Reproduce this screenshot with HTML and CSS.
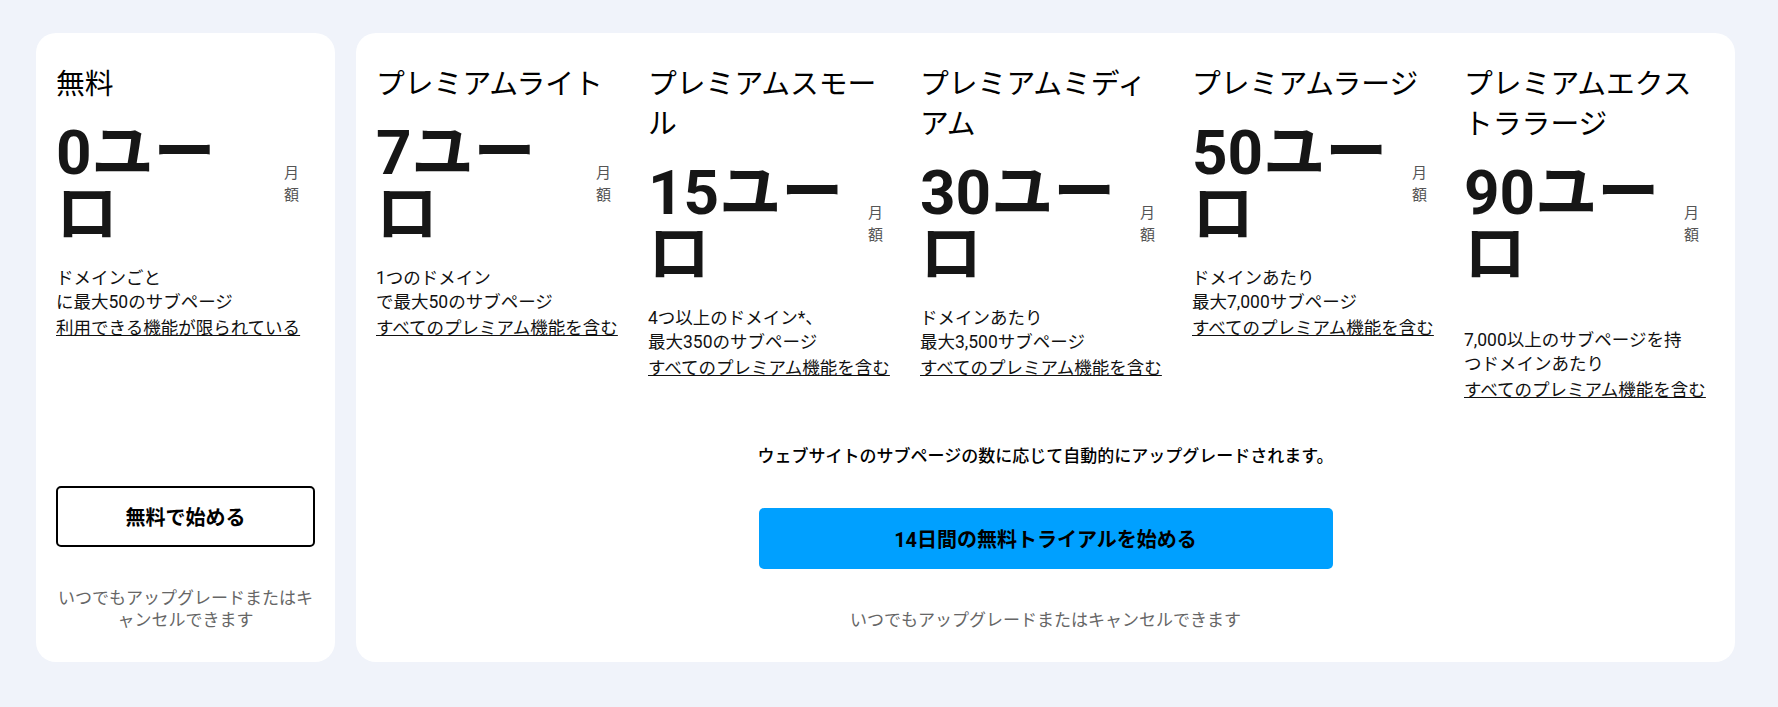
FILE: index.html
```html
<!DOCTYPE html>
<html lang="ja">
<head>
<meta charset="utf-8">
<title>料金プラン</title>
<link rel="stylesheet" href="styles.css">
</head>
<body>
<main class="plans">
  <section class="card card-free">
    <div class="plan">
      <h2 class="plan-title">無料</h2>
      <div class="price-row"><span class="price">0ユーロ</span><span class="per">月額</span></div>
      <p class="desc">ドメインごと<br>に最大50のサブページ</p>
      <a class="features" href="#">利用できる機能が限られている</a>
    </div>
    <a class="btn btn-outline" href="#">無料で始める</a>
    <p class="note">いつでもアップグレードまたはキャンセルできます</p>
  </section>

  <section class="card card-premium">
    <div class="tiers">
      <div class="plan">
        <h2 class="plan-title">プレミアムライト</h2>
        <div class="price-row"><span class="price">7ユーロ</span><span class="per">月額</span></div>
        <p class="desc">1つのドメイン<br>で最大50のサブページ</p>
        <a class="features" href="#">すべてのプレミアム機能を含む</a>
      </div>
      <div class="plan">
        <h2 class="plan-title">プレミアムスモール</h2>
        <div class="price-row"><span class="price">15ユーロ</span><span class="per">月額</span></div>
        <p class="desc">4つ以上のドメイン*、<br>最大350のサブページ</p>
        <a class="features" href="#">すべてのプレミアム機能を含む</a>
      </div>
      <div class="plan">
        <h2 class="plan-title">プレミアムミディアム</h2>
        <div class="price-row"><span class="price">30ユーロ</span><span class="per">月額</span></div>
        <p class="desc">ドメインあたり<br>最大3,500サブページ</p>
        <a class="features" href="#">すべてのプレミアム機能を含む</a>
      </div>
      <div class="plan">
        <h2 class="plan-title">プレミアムラージ</h2>
        <div class="price-row"><span class="price">50ユーロ</span><span class="per">月額</span></div>
        <p class="desc">ドメインあたり<br>最大7,000サブページ</p>
        <a class="features" href="#">すべてのプレミアム機能を含む</a>
      </div>
      <div class="plan">
        <h2 class="plan-title">プレミアムエクストララージ</h2>
        <div class="price-row"><span class="price">90ユーロ</span><span class="per">月額</span></div>
        <p class="desc desc-offset">7,000以上のサブページを持<br>つドメインあたり</p>
        <a class="features" href="#">すべてのプレミアム機能を含む</a>
      </div>
    </div>
    <p class="auto">ウェブサイトのサブページの数に応じて自動的にアップグレードされます。</p>
    <a class="btn btn-primary" href="#">14日間の無料トライアルを始める</a>
    <p class="note">いつでもアップグレードまたはキャンセルできます</p>
  </section>
</main>
</body>
</html>
```
FILE: styles.css
```css
* {
  box-sizing: border-box;
  margin: 0;
  padding: 0;
}

body {
  margin: 0;
  background: #f0f3fa;
  font-family: Roboto, "Noto Sans CJK JP", sans-serif;
  color: #111;
}

.plans {
  display: grid;
  grid-template-columns: 299px 1379px;
  column-gap: 21px;
  padding: 33px 0 0 36px;
  align-items: stretch;
}

.card {
  background: #fff;
  border-radius: 20px;
  padding: 31px 20px 31px;
  display: flex;
  flex-direction: column;
}

.plan-title {
  font-size: 28.8px;
  font-weight: 400;
  line-height: 40px;
  margin-bottom: 18px;
  color: #000;
}

.price-row {
  display: flex;
  justify-content: space-between;
  align-items: center;
  margin-bottom: 20px;
}

.price {
  max-width: 205px;
  font-size: 62px;
  font-weight: 700;
  line-height: 62px;
  color: #161616;
}

.per {
  width: 1em;
  margin-right: 16px;
  font-size: 15px;
  line-height: 22px;
  color: #555;
}

.desc {
  font-size: 17.5px;
  line-height: 24px;
  color: #111;
}

.desc-offset {
  padding-top: 22px;
}

.features {
  display: block;
  margin-top: 2px;
  font-size: 17.5px;
  line-height: 24px;
  color: #111;
  text-decoration: underline;
}

.btn {
  display: flex;
  align-items: center;
  justify-content: center;
  height: 61px;
  border-radius: 5px;
  font-size: 20px;
  font-weight: 700;
  color: #000;
  text-decoration: none;
}

.btn-outline {
  margin-top: auto;
  border: 2px solid #000;
}

.btn-primary {
  align-self: center;
  width: 574px;
  margin-top: 40px;
  background: #00a0ff;
}

.note {
  margin-top: 40px;
  font-size: 17px;
  line-height: 22px;
  color: #666;
  text-align: center;
}

.tiers {
  display: grid;
  grid-template-columns: repeat(5, 1fr);
  column-gap: 21px;
  align-items: start;
}

.auto {
  margin-top: 42px;
  text-align: center;
  font-size: 17px;
  font-weight: 500;
  line-height: 24px;
  color: #000;
}
```
